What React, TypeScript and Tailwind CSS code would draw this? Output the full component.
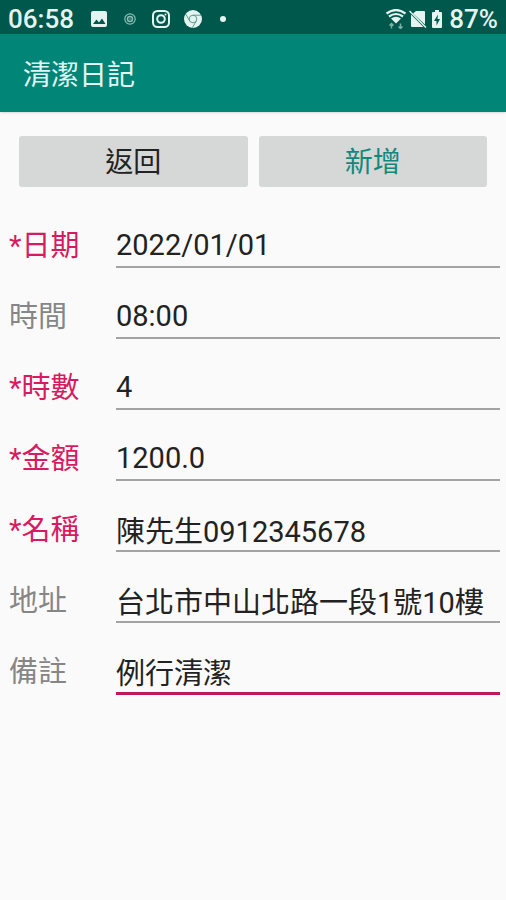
import { useState } from "react";

type Field = {
  id: string;
  label: string;
  value: string;
  required?: boolean;
  active?: boolean;
};

const FIELDS: Field[] = [
  { id: "date", label: "日期", value: "2022/01/01", required: true },
  { id: "time", label: "時間", value: "08:00" },
  { id: "hours", label: "時數", value: "4", required: true },
  { id: "amount", label: "金額", value: "1200.0", required: true },
  { id: "name", label: "名稱", value: "陳先生0912345678", required: true },
  { id: "address", label: "地址", value: "台北市中山北路一段1號10樓" },
  { id: "note", label: "備註", value: "例行清潔", active: true },
];

function StatusBar() {
  return (
    <div className="flex h-[34px] items-center justify-between bg-[#00574b] pt-1 pr-2 pl-2 text-[26px] leading-[30px] text-[#e4f5f1]">
      <div className="flex items-center">
        <span className="w-[66px] font-medium">06:58</span>
        <svg className="ml-4 size-[18px]" viewBox="0 0 18 18" aria-hidden="true">
          <rect x="1" y="1" width="16" height="16" rx="2" fill="currentColor" />
          <path d="M3 14l3.5-4.5 2.5 3 3-4L15.500 14z" fill="#00574b" />
        </svg>
        <svg className="ml-4 size-3" viewBox="0 0 12 12" fill="none" stroke="#8cc0b6" aria-hidden="true">
          <circle cx="6" cy="6" r="5.200" strokeWidth="1.200" />
          <circle cx="6" cy="6" r="2.500" strokeWidth="1.400" />
          <circle cx="6" cy="6" r="0.800" fill="#8cc0b6" stroke="none" />
        </svg>
        <svg className="ml-4 size-[18px]" viewBox="0 0 18 18" fill="none" stroke="currentColor" strokeWidth="2" aria-hidden="true">
          <rect x="1" y="1" width="16" height="16" rx="4.500" />
          <circle cx="9" cy="9" r="3.800" />
          <circle cx="13.500" cy="4.500" r="1" fill="currentColor" stroke="none" />
        </svg>
        <svg className="ml-[14px] size-[18px]" viewBox="0 0 18 18" aria-hidden="true">
          <circle cx="9" cy="9" r="9" fill="currentColor" />
          <g fill="none" stroke="#5d9a8f" strokeWidth="1">
            <circle cx="9" cy="9" r="3.800" />
            <path d="M9 5.200h8M5.700 10.900L1.800 4.200M12.300 10.900L8.300 17.800" />
          </g>
        </svg>
        <span className="ml-[18px] size-[6px] rounded-full bg-[#e4f5f1]" />
      </div>
      <div className="flex items-center">
        <svg className="size-5" viewBox="0 0 20 20" aria-hidden="true">
          <g fill="none" stroke="currentColor" strokeWidth="2.200">
            <path d="M0.500 4.500Q10-2.500 19.500 4.500" />
            <path d="M3 7.500Q10 2.500 17 7.500" />
          </g>
          <path d="M5 9.500Q10 6 15 9.500L10 14.500z" fill="currentColor" />
          <g fill="none" stroke="#79b0a6" strokeWidth="1.500">
            <path d="M5.500 19.500v-5M3.500 16.500l2-2 2 2M14.500 14.500v5M12.500 17.500l2 2 2-2" />
          </g>
        </svg>
        <svg className="ml-[3px] size-[18px]" viewBox="0 0 18 18" aria-hidden="true">
          <path d="M7 1h8q1 0 1 1v12.500L4 3.500zM2 4.500L14.500 17H3q-1 0-1-1z" fill="currentColor" />
          <path d="M0.500 1L17 17.500" stroke="currentColor" strokeWidth="1.500" />
        </svg>
        <svg className="ml-1 h-[18px] w-3" viewBox="0 0 12 18" aria-hidden="true">
          <path d="M4 0h4v2h2q1 0 1 1v14q0 1-1 1H2q-1 0-1-1V3q0-1 1-1h2z" fill="currentColor" />
          <path d="M7 4.500L3 11h2.500v4.500L9 9H6.500z" fill="#00574b" />
        </svg>
        <span className="ml-1.5 font-medium">87%</span>
      </div>
    </div>
  );
}

export default function App() {
  const [values, setValues] = useState<Record<string, string>>(
    Object.fromEntries(FIELDS.map((f) => [f.id, f.value])),
  );

  return (
    <div className="min-h-screen bg-[#fafafa] font-[Roboto,'Noto_Sans_CJK_TC',sans-serif]">
      <StatusBar />
      <header className="flex h-[78px] items-center bg-[#008577] px-[23px] pt-1.5 shadow-sm">
        <h1 className="text-[28px] leading-10 text-[#e0f7f3]">清潔日記</h1>
      </header>
      <main>
        <div className="flex gap-[11px] px-[19px] pt-6">
          <button type="button" className="h-[51px] flex-1 rounded-[3px] bg-[#d6d7d7] pt-0.5 text-[28px] leading-10 text-[#222222]">
            返回
          </button>
          <button type="button" className="h-[51px] flex-1 rounded-[3px] bg-[#d6d7d7] pt-0.5 text-[28px] leading-10 text-[#12887a]">
            新增
          </button>
        </div>
        <form className="flex flex-col gap-[27px] pt-[37px] pr-[6px] pl-[9px] text-[29px] leading-[44px]">
          {FIELDS.map((f) => (
            <div key={f.id} className="flex items-start">
              <label
                htmlFor={f.id}
                className={
                  f.required
                    ? "w-[107px] shrink-0 text-[#d81b60]"
                    : "w-[107px] shrink-0 text-[#868686]"
                }
              >
                {f.required ? "*" : ""}
                {f.label}
              </label>
              <input
                id={f.id}
                type="text"
                value={values[f.id]}
                onChange={(e) => setValues({ ...values, [f.id]: e.target.value })}
                className={
                  f.active
                    ? "h-[45px] min-w-0 flex-1 border-b-3 border-[#c2185b] leading-10 text-[#222222] outline-none"
                    : "h-11 min-w-0 flex-1 border-b-2 border-[#a3a3a3] leading-10 text-[#222222] outline-none"
                }
              />
            </div>
          ))}
        </form>
      </main>
    </div>
  );
}
